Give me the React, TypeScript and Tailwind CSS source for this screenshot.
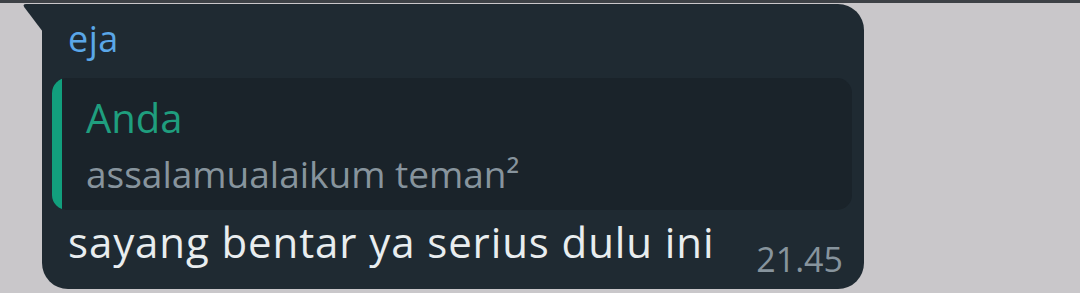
import React from "react";

export default function App() {
  return (
    <div
      className="w-[1080px] h-[293px] bg-[#c9c7ca] border-t-[3px] border-[#3d4146] overflow-hidden"
      style={{ fontFamily: "'Open Sans', 'Noto Sans', sans-serif" }}
    >
      <div className="relative ml-[42px] mt-[1px] w-[822px] h-[285px] bg-[#1f2a32] rounded-[26px] rounded-tl-none">
        <svg
          className="absolute left-[-20px] top-0"
          width="21"
          height="28"
          viewBox="0 0 21 28"
        >
          <path d="M21 0 L4 0 Q0 0 2.5 3.5 L21 28 Z" fill="#1f2a32" />
        </svg>
        <div className="pl-[26px] pt-[17px] text-[36px] leading-[36px] tracking-[0.5px] text-[#5aa7e8]">eja</div>
        <div className="mt-[21px] ml-[10px] mr-[12px] h-[132px] rounded-[15px] bg-[#1a232a] flex overflow-hidden">
          <div className="w-[10px] bg-[#129f7d] rounded-l-[15px]" />
          <div className="pl-[24px] pt-[20px]">
            <div className="text-[40px] leading-[40px] text-[#1f9e7e]">Anda</div>
            <div className="mt-[16px] text-[37px] leading-[40px] text-[#87949d]">assalamualaikum teman²</div>
          </div>
        </div>
        <div className="flex items-start pl-[26px] pr-[21px] mt-[8px]">
          <div className="text-[42px] leading-[48px] tracking-[0.9px] text-[#e9edef]">sayang bentar ya serius dulu ini</div>
          <div className="ml-auto mt-[23px] text-[34px] leading-[36px] text-[#87949d]">21.45</div>
        </div>
      </div>
    </div>
  );
}
